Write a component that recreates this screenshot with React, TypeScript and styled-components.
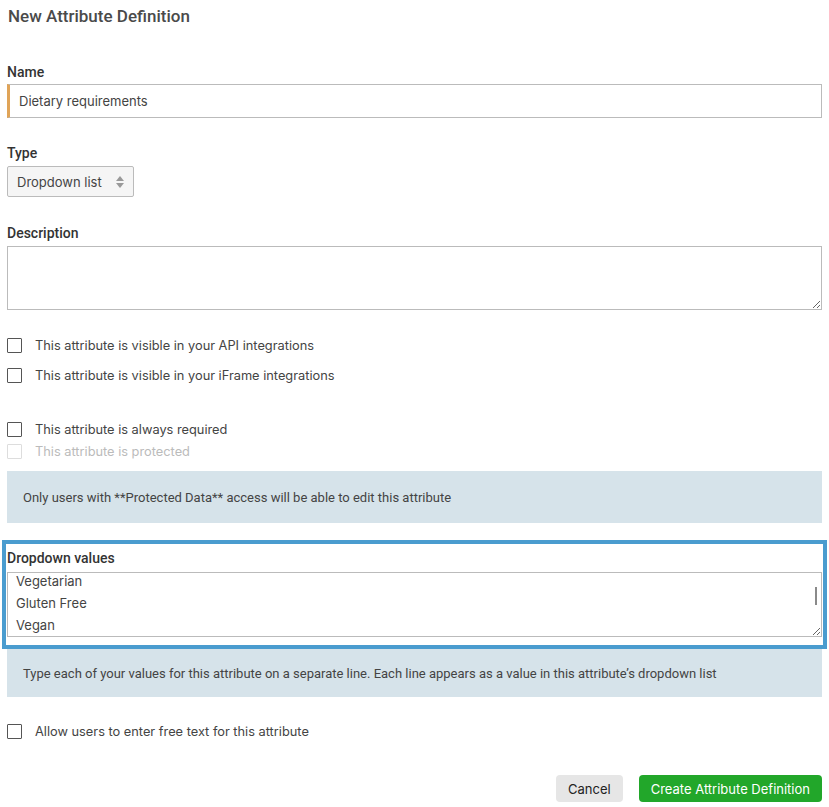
import React, { FC, useEffect, useRef } from "react";
import styled, { createGlobalStyle } from "styled-components";

const GlobalStyle = createGlobalStyle`
  * {
    box-sizing: border-box;
  }
  body {
    margin: 0;
    background: #fff;
    font-family: Roboto, "Liberation Sans", Arial, sans-serif;
    color: #333;
  }
`;

const Page = styled.div`
  width: 829px;
  padding: 6px 7px 0 7px;
  display: flex;
  flex-direction: column;
`;

const Title = styled.h2`
  margin: 0 0 37px 1px;
  font-size: 17px;
  line-height: 20px;
  font-weight: 500;
  color: #4a4a4a;
`;

const Field = styled.div<{ $gap?: number; $inner?: number }>`
  display: flex;
  flex-direction: column;
  gap: ${(p) => p.$inner ?? 3}px;
  margin-bottom: ${(p) => p.$gap ?? 0}px;
`;

const Label = styled.label`
  font-size: 14px;
  line-height: 18px;
  font-weight: 500;
  color: #333;
`;

const TextInput = styled.input`
  height: 34px;
  width: 100%;
  border: 1px solid #bbb;
  border-left: 3px solid #e0a458;
  padding: 0 9px;
  font-family: Inter, Roboto, sans-serif;
  font-size: 13px;
  color: #444;
  outline: none;
`;

const Select = styled.div`
  width: 127px;
  height: 31px;
  margin-top: 1px;
  border: 1px solid #bbb;
  border-radius: 2px;
  background: #f5f5f5;
  display: flex;
  align-items: center;
  justify-content: space-between;
  padding: 0 8px 0 9px;
  font-family: Inter, Roboto, sans-serif;
  font-size: 13px;
  color: #444;
`;

const TextArea = styled.textarea<{ $h: number }>`
  width: 100%;
  height: ${(p) => p.$h}px;
  border: 1px solid #bbb;
  padding: 4px 8px;
  font-family: Inter, Roboto, sans-serif;
  font-size: 13px;
  line-height: 22px;
  color: #444;
  resize: vertical;
  outline: none;
  display: block;
  scrollbar-width: none;
`;

const ValuesWrap = styled.div`
  position: relative;

  &::after {
    content: "";
    position: absolute;
    right: 5px;
    top: 15px;
    width: 2px;
    height: 18px;
    background: #8a8a8a;
  }
`;

const CheckList = styled.div<{ $gap: number; $mb: number }>`
  display: flex;
  flex-direction: column;
  gap: ${(p) => p.$gap}px;
  margin-bottom: ${(p) => p.$mb}px;
`;

const CheckRow = styled.label<{ $disabled?: boolean }>`
  display: flex;
  align-items: center;
  gap: 13px;
  height: 20px;
  font-family: Inter, Roboto, sans-serif;
  font-size: 12.8px;
  color: ${(p) => (p.$disabled ? "#bbb" : "#444")};
`;

const Box = styled.input`
  appearance: none;
  margin: 0;
  width: 15px;
  height: 15px;
  border: 1px solid ${(p) => (p.disabled ? "#ddd" : "#555")};
  border-radius: 1px;
  background: #fff;
`;

const Panel = styled.div<{ $h: number; $mb: number }>`
  background: #d6e3ea;
  height: ${(p) => p.$h}px;
  margin-bottom: ${(p) => p.$mb}px;
  padding: 0 16px;
  display: flex;
  align-items: center;
  font-size: 13px;
  color: #444;
`;

const Highlight = styled.section`
  margin: 0 -5px;
  border: 4px solid #4a9ccf;
  padding: 5px 1px 8px 1px;
  display: flex;
  flex-direction: column;
  gap: 5px;
`;

const Actions = styled.div`
  display: flex;
  justify-content: flex-end;
  gap: 16px;
  margin-top: 34px;
`;

const Button = styled.button<{ $primary?: boolean }>`
  height: 27px;
  border: none;
  border-radius: 4px;
  padding: 0 12px;
  font-family: Inter, Roboto, sans-serif;
  font-size: 13px;
  background: ${(p) => (p.$primary ? "#22a72a" : "#e6e6e6")};
  color: ${(p) => (p.$primary ? "#fff" : "#222")};
`;

const SortArrows: FC = () => (
  <svg width="10" height="14" viewBox="0 0 10 14">
    <path d="M5 1 L9 6 H1 Z" fill="#999" />
    <path d="M5 13 L9 8 H1 Z" fill="#999" />
  </svg>
);

type CheckProps = { label: string; disabled?: boolean };

const Check: FC<CheckProps> = ({ label, disabled }) => (
  <CheckRow $disabled={disabled}>
    <Box type="checkbox" disabled={disabled} />
    {label}
  </CheckRow>
);

const App: FC = () => {
  const valuesRef = useRef<HTMLTextAreaElement>(null);

  useEffect(() => {
    if (valuesRef.current) valuesRef.current.scrollTop = 7;
  }, []);

  return (
    <Page>
      <GlobalStyle />
      <Title>New Attribute Definition</Title>

      <Field $gap={26}>
        <Label>Name</Label>
        <TextInput defaultValue="Dietary requirements" />
      </Field>

      <Field $gap={27}>
        <Label>Type</Label>
        <Select>
          <span>Dropdown list</span>
          <SortArrows />
        </Select>
      </Field>

      <Field $gap={25} $inner={4}>
        <Label>Description</Label>
        <TextArea $h={64} />
      </Field>

      <CheckList $gap={10} $mb={34}>
        <Check label="This attribute is visible in your API integrations" />
        <Check label="This attribute is visible in your iFrame integrations" />
      </CheckList>

      <CheckList $gap={2} $mb={10}>
        <Check label="This attribute is always required" />
        <Check label="This attribute is protected" disabled />
      </CheckList>

      <Panel $h={52} $mb={17}>
        Only users with **Protected Data** access will be able to edit this
        attribute
      </Panel>

      <Highlight>
        <Label>Dropdown values</Label>
        <ValuesWrap>
          <TextArea
            ref={valuesRef}
            $h={65}
            defaultValue={"Vegetarian\nGluten Free\nVegan"}
          />
        </ValuesWrap>
      </Highlight>

      <Panel $h={48} $mb={24}>
        Type each of your values for this attribute on a separate line. Each
        line appears as a value in this attribute’s dropdown list
      </Panel>

      <Check label="Allow users to enter free text for this attribute" />

      <Actions>
        <Button>Cancel</Button>
        <Button $primary>Create Attribute Definition</Button>
      </Actions>
    </Page>
  );
};

export default App;
